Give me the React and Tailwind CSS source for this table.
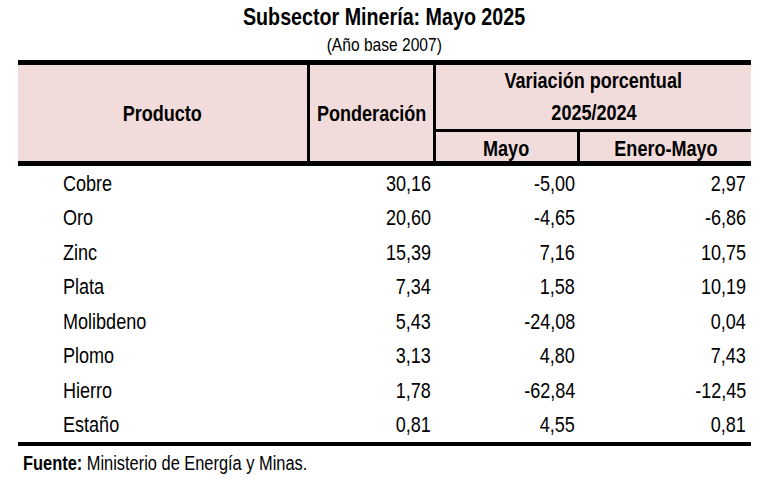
const rows = [
  ["Cobre", "30,16", "-5,00", "2,97"],
  ["Oro", "20,60", "-4,65", "-6,86"],
  ["Zinc", "15,39", "7,16", "10,75"],
  ["Plata", "7,34", "1,58", "10,19"],
  ["Molibdeno", "5,43", "-24,08", "0,04"],
  ["Plomo", "3,13", "4,80", "7,43"],
  ["Hierro", "1,78", "-62,84", "-12,45"],
  ["Estaño", "0,81", "4,55", "0,81"],
]

// Arial Narrow look: Liberation Sans squeezed to 82%
function N({ children, className = "origin-center" }) {
  return <span className={"inline-block scale-x-[0.82] whitespace-nowrap " + className}>{children}</span>
}

export default function App() {
  return (
    <div className="w-[770px] h-[483px] bg-white text-black font-['Liberation_Sans',Arial,sans-serif]">
      <div className="ml-[18px] w-[733px]">

        {/* Title */}
        <div className="h-[60px] pt-[2px] text-center">
          <h1 className="text-[24px] leading-[30px] font-bold"><N>Subsector Minería: Mayo 2025</N></h1>
          <p className="text-[19px] leading-[26px]"><N>(Año base 2007)</N></p>
        </div>

        {/* Header */}
        <div className="flex h-[106px] border-t-[5px] border-b-[5px] border-black bg-[#f2dcdb] text-[22px] font-bold">
          <div className="w-[292px] border-r-[3px] border-black flex items-center justify-center"><N>Producto</N></div>
          <div className="w-[126px] border-r-[3px] border-black flex items-center justify-center"><N>Ponderación</N></div>
          <div className="flex-1 flex flex-col">
            <div className="h-[67px] border-b-[3px] border-black flex flex-col items-center justify-center leading-[32px]">
              <N>Variación porcentual</N>
              <N>2025/2024</N>
            </div>
            <div className="flex-1 flex">
              <div className="w-[144px] border-r-[3px] border-black flex items-center justify-center"><N>Mayo</N></div>
              <div className="flex-1 flex items-center justify-center"><N>Enero-Mayo</N></div>
            </div>
          </div>
        </div>

        {/* Body */}
        <div className="border-b-[4px] border-black text-[22px]">
          {rows.map((r, i) => (
            <div key={i} className="flex h-[34.5px] items-center">
              <div className="w-[292px] pl-[45px]"><N className="origin-left">{r[0]}</N></div>
              <div className="w-[126px] pr-[5px] text-right"><N className="origin-right">{r[1]}</N></div>
              <div className="w-[144px] pr-[5px] text-right"><N className="origin-right">{r[2]}</N></div>
              <div className="flex-1 pr-[5px] text-right"><N className="origin-right">{r[3]}</N></div>
            </div>
          ))}
        </div>

        {/* Footer */}
        <p className="mt-[6px] pl-[5px] text-[20px] leading-[22px]">
          <N className="origin-left">
            <span className="font-bold">Fuente:</span> Ministerio de Energía y Minas.
          </N>
        </p>
      </div>
    </div>
  )
}
